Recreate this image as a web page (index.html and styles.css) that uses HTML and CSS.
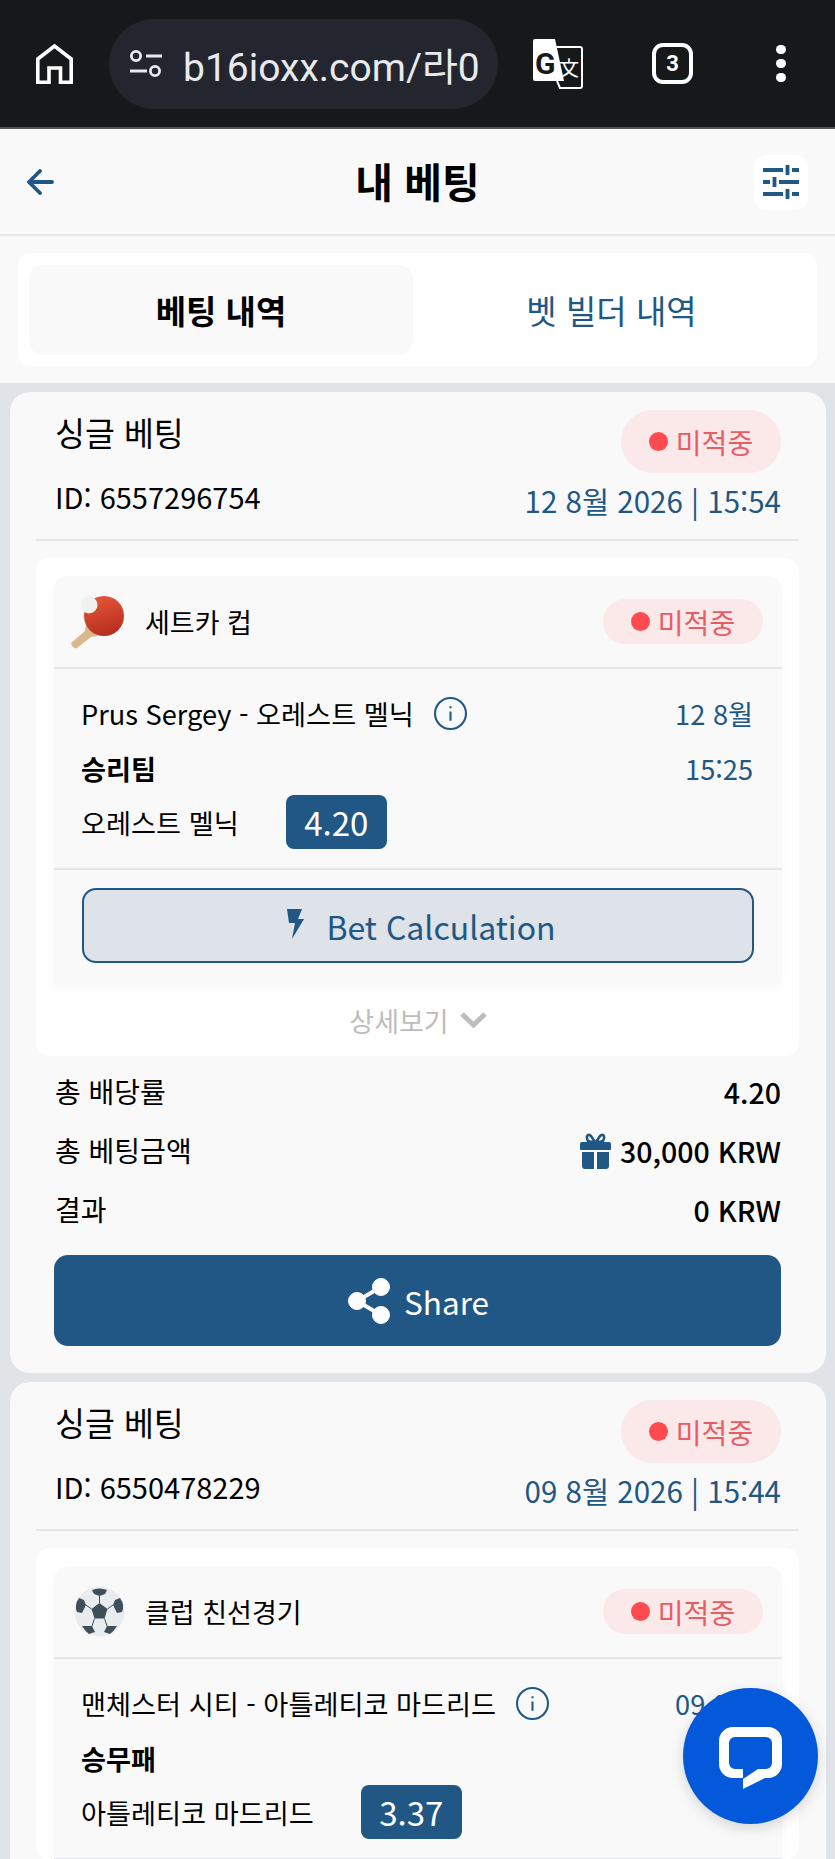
FILE: index.html
```html
<!DOCTYPE html>
<html lang="ko">
<head>
<meta charset="utf-8">
<title>내 베팅</title>
<link rel="stylesheet" href="styles.css">
</head>
<body>
<div class="page">
  <div class="browser">
    <svg class="home" viewBox="0 0 37 40" fill="none" stroke="#fff" stroke-width="3.6"><path d="M1.800 38.300V15L18.500 2l16.700 13v23.300H24.500V24H13v14.300Z"/></svg>
    <div class="url">
      <svg class="tune" viewBox="0 0 34 28" fill="none" stroke="#e8eaed" stroke-width="2.8"><circle cx="7" cy="6" r="4.600"/><path d="M17 6h16M1 21h17"/><circle cx="26" cy="21" r="4.600"/></svg>
      <span class="url-text">b16ioxx.com/라0</span>
    </div>
    <svg class="translate" viewBox="0 0 50 50">
      <path d="M22 8h25a2 2 0 0 1 2 2v37a2 2 0 0 1-2 2H27l-3-7" fill="none" stroke="#fff" stroke-width="2"/>
      <path d="M2 0h20l9 42H2a2 2 0 0 1-2-2V2a2 2 0 0 1 2-2Z" fill="#fff"/>
      <text x="2" y="35" class="tr-g">G</text>
      <text x="26" y="37" class="tr-k">文</text>
    </svg>
    <div class="tabs-count">3</div>
    <div class="dots"><i></i><i></i><i></i></div>
  </div>

  <header class="top">
    <svg class="back" viewBox="0 0 27 26" fill="none" stroke="#215784" stroke-width="3.800" stroke-linecap="round" stroke-linejoin="round"><path d="M13 2 2 13l11 11M3 13h22"/></svg>
    <h1 class="title">내 베팅</h1>
    <div class="filter">
      <svg viewBox="0 0 36 34" fill="none" stroke="#215784" stroke-width="3.800"><path d="M0 5h20M29 5h7M0 17h7M16 17h20M0 29h20M29 29h7"/><path d="M24.500 0v10M11.500 12v10M24.500 24v10"/></svg>
    </div>
  </header>

  <section class="switch">
    <div class="switch-card">
      <div class="switch-tab is-active">베팅 내역</div>
      <div class="switch-tab">벳 빌더 내역</div>
    </div>
  </section>

  <article class="card">
    <div class="card-head">
      <div class="head-row">
        <div class="bet-type">싱글 베팅</div>
        <div class="badge badge-lg"><i class="dot"></i>미적중</div>
      </div>
      <div class="meta-row">
        <div class="bet-id">ID: 6557296754</div>
        <div class="bet-date">12 8월 2026 | 15:54</div>
      </div>
    </div>
    <div class="events">
      <div class="event">
        <div class="league">
          <svg class="sport" viewBox="11 13 56 56">
            <defs><linearGradient id="pad" x1="0" y1="0" x2="0.3" y2="1"><stop offset="0" stop-color="#e85a3c"/><stop offset="1" stop-color="#b8301f"/></linearGradient></defs>
            <path d="M26 44l12 11-7 1-14 11q-2 1-4-1t-2-4l14-12Z" fill="#d8b88c"/>
            <circle cx="44" cy="35" r="20" fill="url(#pad)"/>
            <circle cx="29" cy="24" r="8.500" fill="#f1f1ee"/>
          </svg>
          <span class="league-name">세트카 컵</span>
          <div class="badge badge-sm"><i class="dot"></i>미적중</div>
        </div>
        <div class="event-body">
          <div class="line line-match">
            <div class="match"><span>Prus Sergey - 오레스트 멜닉</span>
              <svg class="info" viewBox="0 0 32 32" fill="none" stroke="#215784" stroke-width="2"><circle cx="16" cy="16" r="15"/><path d="M16 14v9M16 9v2"/></svg>
            </div>
            <span class="ev-date">12 8월</span>
          </div>
          <div class="line line-market">
            <strong class="market">승리팀</strong>
            <span class="ev-date">15:25</span>
          </div>
          <div class="line-pick">
            <span>오레스트 멜닉</span>
            <span class="odds">4.20</span>
          </div>
        </div>
        <div class="calc-wrap">
          <div class="calc">
            <svg class="bolt" viewBox="0 0 18 30"><path d="M1 0h15l-4 10h6L6 30l3-16H3Z" fill="#215784"/></svg>
            <span>Bet Calculation</span>
          </div>
        </div>
      </div>
      <div class="more">
        <span>상세보기</span>
        <svg class="chev" viewBox="0 0 27 16" fill="none" stroke="#bdbdbd" stroke-width="5"><path d="M2 2l11.500 11L25 2"/></svg>
      </div>
    </div>
    <div class="sum-row first"><span>총 배당률</span><b class="sum-val">4.20</b></div>
    <div class="sum-row"><span>총 베팅금액</span>
      <b class="sum-val">
        <svg class="gift" viewBox="0 0 31 36" fill="#215784"><path d="M2 19h12v17H5a3 3 0 0 1-3-3ZM17 19h12v14a3 3 0 0 1-3 3h-9ZM2 9h27a2 2 0 0 1 2 2v5a1 1 0 0 1-1 1H1a1 1 0 0 1-1-1v-5a2 2 0 0 1 2-2Z"/><path d="M15 9 11 3Q9 1 7.500 2.500T8 8Q10 9 15 9ZM16 9l4-6q2-2 3.500-.5T23 8q-2 1-7 1Z" fill="none" stroke="#215784" stroke-width="2.600"/></svg>
        30,000 KRW</b>
    </div>
    <div class="sum-row"><span>결과</span><b class="sum-val">0 KRW</b></div>
    <div class="share">
      <svg class="share-ic" viewBox="0 0 46 46" fill="#fff" stroke="#fff"><path d="M35 9 11 23l24 14" fill="none" stroke-width="4"/><circle cx="35" cy="9" r="8.500"/><circle cx="11" cy="23" r="8.500"/><circle cx="35" cy="37" r="8.500"/></svg>
      <span>Share</span>
    </div>
  </article>

  <article class="card">
    <div class="card-head">
      <div class="head-row">
        <div class="bet-type">싱글 베팅</div>
        <div class="badge badge-lg"><i class="dot"></i>미적중</div>
      </div>
      <div class="meta-row">
        <div class="bet-id">ID: 6550478229</div>
        <div class="bet-date">09 8월 2026 | 15:44</div>
      </div>
    </div>
    <div class="events">
      <div class="event">
        <div class="league">
          <svg class="sport" viewBox="12 8 56 56">
            <circle cx="40.500" cy="35.500" r="25" fill="#e9ecef"/>
            <g fill="#3f4f5a">
              <path d="M40.500 27l8 6-3 9.500h-10l-3-9.500Z"/>
              <path d="M33 14q7.500-3 15 0l-2 4-5.500 2-5.500-2Z"/>
              <path d="M20 22l5 2 2 5-4 8-5-1q-3-7 2-14Z"/>
              <path d="M61 22l-5 2-2 5 4 8 5-1q3-7-2-14Z"/>
              <path d="M23 50h10l3 6-6 2q-4-3-7-8Z"/>
              <path d="M58 50H48l-3 6 6 2q4-3 7-8Z"/>
            </g>
            <path d="M40.500 20v7M27 29l5.500 4M54 29l-5.500 4M35.500 42.500 33 50M45.500 42.500 48 50" stroke="#3f4f5a" stroke-width="1" fill="none"/>
          </svg>
          <span class="league-name">클럽 친선경기</span>
          <div class="badge badge-sm"><i class="dot"></i>미적중</div>
        </div>
        <div class="event-body">
          <div class="line line-match">
            <div class="match"><span>맨체스터 시티 - 아틀레티코 마드리드</span>
              <svg class="info" viewBox="0 0 32 32" fill="none" stroke="#215784" stroke-width="2"><circle cx="16" cy="16" r="15"/><path d="M16 14v9M16 9v2"/></svg>
            </div>
            <span class="ev-date">09 8월</span>
          </div>
          <div class="line line-market">
            <strong class="market">승무패</strong>
          </div>
          <div class="line-pick">
            <span>아틀레티코 마드리드</span>
            <span class="odds">3.37</span>
          </div>
        </div>
      </div>
    </div>
  </article>

  <div class="chat">
    <svg viewBox="0 0 63 62"><path fill-rule="evenodd" fill="#fff" d="M14 0h35a14 14 0 0 1 14 14v23a14 14 0 0 1-14 14h-3L24 62V51H14A14 14 0 0 1 0 37V14A14 14 0 0 1 14 0Zm2 10a6 6 0 0 0-6 6v20a6 6 0 0 0 6 6h8v10l15-10h8a6 6 0 0 0 6-6V16a6 6 0 0 0-6-6Z"/></svg>
  </div>
</div>
</body>
</html>
```

FILE: styles.css
```css
* { box-sizing: border-box; }
html, body { margin: 0; padding: 0; height: 1859px; overflow: hidden; }
body { background: #e0e4e8; font-family: "Noto Sans CJK KR", "Noto Sans", sans-serif; color: #000; }
.page { position: relative; width: 835px; height: 1859px; overflow: hidden; }

/* browser chrome */
.browser { height: 129px; background: #17181a; border-bottom: 2px solid #55555c; display: flex; align-items: center; padding-left: 36px; }
.home { width: 37px; height: 40px; flex: none; }
.url { width: 389px; height: 90px; margin-left: 36px; border-radius: 45px; background: #23252f; display: flex; align-items: center; padding-left: 20px; flex: none; overflow: hidden; }
.tune { width: 34px; height: 28px; flex: none; }
.url-text { margin-left: 20px; font-family: Roboto, "Noto Sans CJK KR", sans-serif; font-size: 39px; color: #e8eaed; white-space: nowrap; }
.translate { width: 50px; height: 50px; margin-left: 35px; flex: none; }
.tr-g { font: 700 30px Roboto, sans-serif; fill: #17181a; }
.tr-k { font: 400 20px "Noto Sans CJK SC", sans-serif; fill: #fff; }
.tabs-count { width: 41px; height: 41px; margin-left: 69px; border: 4px solid #fff; border-radius: 11px; color: #fff; font: 700 22px/33px Roboto, sans-serif; text-align: center; flex: none; }
.dots { margin-left: 83px; display: flex; flex-direction: column; gap: 4.500px; flex: none; }
.dots i { display: block; width: 9.500px; height: 9.500px; border-radius: 50%; background: #fff; }

/* page header */
.top { height: 107px; background: #f9f9f9; border-bottom: 2px solid #e6e7e9; display: flex; align-items: center; justify-content: space-between; padding: 0 27px; }
.back { width: 27px; height: 26px; }
.title { margin: 0 0 3px 27px; font-size: 41px; line-height: 50px; font-weight: 700; }
.filter { width: 54px; height: 55px; background: #fff; border-radius: 12px; display: flex; align-items: center; justify-content: center; margin-top: 1px; }
.filter svg { width: 36px; height: 34px; }

.switch { background: #f9f9f9; padding: 17px 18px; }
.switch-card { height: 113px; background: #fff; border-radius: 12px; padding: 12px 11px 11px; display: flex; }
.switch-tab { flex: 1; height: 90px; border-radius: 14px; display: flex; align-items: center; justify-content: center; font-size: 33px; color: #215784; padding-left: 4px; }
.switch-tab.is-active { background: #f9f9f9; color: #000; font-weight: 700; flex: none; width: 384px; padding-left: 0; }

/* bet card */
.card { margin: 9px 9px 0 10px; background: #f9f9f9; border-radius: 20px; padding: 18px 27px 27px 26px; }
.card-head { border-bottom: 2px solid #e4e6e9; padding: 0 18px 0 19px; height: 131px; }
.head-row { display: flex; justify-content: space-between; align-items: flex-start; height: 63px; }
.bet-type { font-size: 32.500px; line-height: 43px; }
.badge { display: flex; align-items: center; justify-content: center; gap: 8px; background: #fbe8e8; color: #e85c66; font-size: 28px; width: 160px; }
.badge-lg { height: 63px; border-radius: 32px; }
.badge-sm { height: 45px; border-radius: 23px; margin-left: auto; }
.dot { display: block; width: 19px; height: 19px; border-radius: 50%; background: #ff4b50; }
.meta-row { display: flex; justify-content: space-between; align-items: flex-start; height: 66px; }
.bet-id { font-size: 29px; line-height: 46px; }
.bet-date { font-size: 29.500px; line-height: 55px; color: #215784; }

.events { margin-top: 17px; background: #fff; border-radius: 14px; padding: 18px 17px 0 18px; }
.event { background: #f9f9f9; border-radius: 14px 14px 0 0; box-shadow: 0 5px 8px rgba(0,0,0,.03); }
.league { height: 93px; border-bottom: 2px solid #e4e6ea; display: flex; align-items: center; padding: 0 19px 0 17px; }
.sport { width: 56px; height: 56px; flex: none; }
.league-name { margin-left: 18px; font-size: 27px; }
.event-body { padding: 26px 29px 19px 27px; border-bottom: 2px solid #e4e6ea; font-size: 27.200px; }
.line { display: flex; justify-content: space-between; line-height: 37px; height: 40px; }
.match { display: flex; align-items: center; gap: 20px; white-space: nowrap; height: 37px; }
.info { width: 33px; height: 33px; flex: none; }
.ev-date { color: #215784; }
.line-market { margin-top: 15px; }
.market { font-weight: 700; }
.line-pick { display: flex; align-items: center; gap: 47px; height: 54px; margin-top: 5px; }
.odds { width: 101px; height: 54px; border-radius: 8px; background: #215784; color: #fff; font-size: 33px; line-height: 54px; text-align: center; }
.calc-wrap { padding: 18px 28px 20px; }
.calc { height: 75px; background: #dee2e9; border: 2px solid #215784; border-radius: 14px; display: flex; align-items: center; justify-content: center; gap: 22px; color: #215784; font-size: 32px; padding-left: 6px; }
.bolt { width: 18px; height: 30px; margin-top: -3px; }
.more { height: 73px; padding-top: 18px; display: flex; align-items: flex-start; justify-content: center; gap: 11px; color: #bdbdbd; font-size: 27px; line-height: 40px; }
.chev { width: 27px; height: 16px; margin-top: 11px; }

.sum-row { height: 59px; padding: 0 18px 3px 19px; display: flex; align-items: center; justify-content: space-between; font-size: 28px; }
.sum-row.first { margin-top: 7px; }
.sum-val { font-weight: 500; font-size: 28.500px; display: flex; align-items: center; gap: 9px; }
.gift { width: 31px; height: 36px; margin-top: 1px; }
.share { margin: 15px 18px 0; height: 91px; background: #215784; border-radius: 14px; display: flex; align-items: center; justify-content: center; gap: 12px; color: #fff; font-size: 31.500px; }
.share-ic { width: 46px; height: 46px; }

.chat { position: absolute; left: 683px; top: 1688px; width: 135px; height: 136px; border-radius: 50%; background: #0459da; box-shadow: 0 4px 14px rgba(0,0,0,.15); display: flex; align-items: center; justify-content: center; padding-top: 4px; }
.chat svg { width: 63px; height: 62px; }
```
